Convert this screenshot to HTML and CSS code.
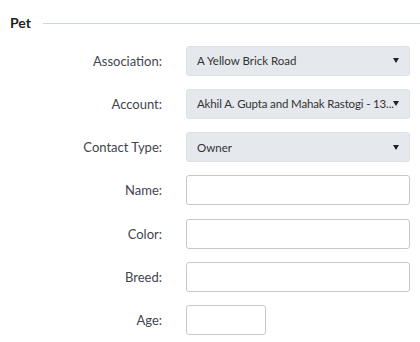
FILE: index.html
```html
<!DOCTYPE html>
<html>
<head>
<meta charset="utf-8">
<link rel="stylesheet" href="styles.css">
</head>
<body>
<div class="panel">
  <div class="legend"><span class="legend-title">Pet</span><span class="legend-line"></span></div>
  <div class="form">
    <div class="row"><label class="lbl">Association:</label><div class="select"><span class="sel-text">A Yellow Brick Road</span><span class="caret"></span></div></div>
    <div class="row"><label class="lbl">Account:</label><div class="select"><span class="sel-text tightx">Akhil A. Gupta and Mahak Rastogi - 13...</span><span class="caret"></span></div></div>
    <div class="row"><label class="lbl">Contact Type:</label><div class="select"><span class="sel-text">Owner</span><span class="caret"></span></div></div>
    <div class="row"><label class="lbl">Name:</label><div class="input"></div></div>
    <div class="row"><label class="lbl">Color:</label><div class="input"></div></div>
    <div class="row"><label class="lbl">Breed:</label><div class="input"></div></div>
    <div class="row"><label class="lbl">Age:</label><div class="input small"></div></div>
  </div>
</div>
</body>
</html>
```
FILE: styles.css
```css
html, body { margin: 0; padding: 0; background: #fff; }
body { font-family: "Lato", "Noto Sans", sans-serif; color: #333; }
.panel { width: 420px; height: 342px; box-sizing: border-box; padding: 13px 0 0 10px; }
.legend { display: flex; align-items: center; height: 18px; }
.legend-title { font-size: 14px; font-weight: 700; color: #222; margin-right: 12px; }
.legend-line { flex: 1; height: 1px; background: #bfd6f6; margin-top: 2px; }
.form { display: flex; flex-direction: column; gap: 13.3px; margin-top: 14.5px; }
.row { display: flex; align-items: center; height: 30px; }
.lbl { width: 152px; text-align: right; font-size: 13px; color: #3f4650; padding-right: 24px; }
.select { box-sizing: border-box; width: 224px; height: 30px; background: #e5e8ed; border: 1px solid #dde1e6; border-radius: 3px; display: flex; align-items: center; padding: 0 10px; font-size: 11.5px; color: #333; }
.sel-text { white-space: nowrap; flex: 1; min-width: 0; }
.sel-text.tightx { letter-spacing: -0.15px; }
.caret { flex: none; width: 0; height: 0; border-left: 3px solid transparent; border-right: 3px solid transparent; border-top: 5px solid #222; }
.input { box-sizing: border-box; width: 224px; height: 30px; border: 1px solid #c8c8c8; border-radius: 3px; background: #fff; }
.input.small { width: 80px; }
```
